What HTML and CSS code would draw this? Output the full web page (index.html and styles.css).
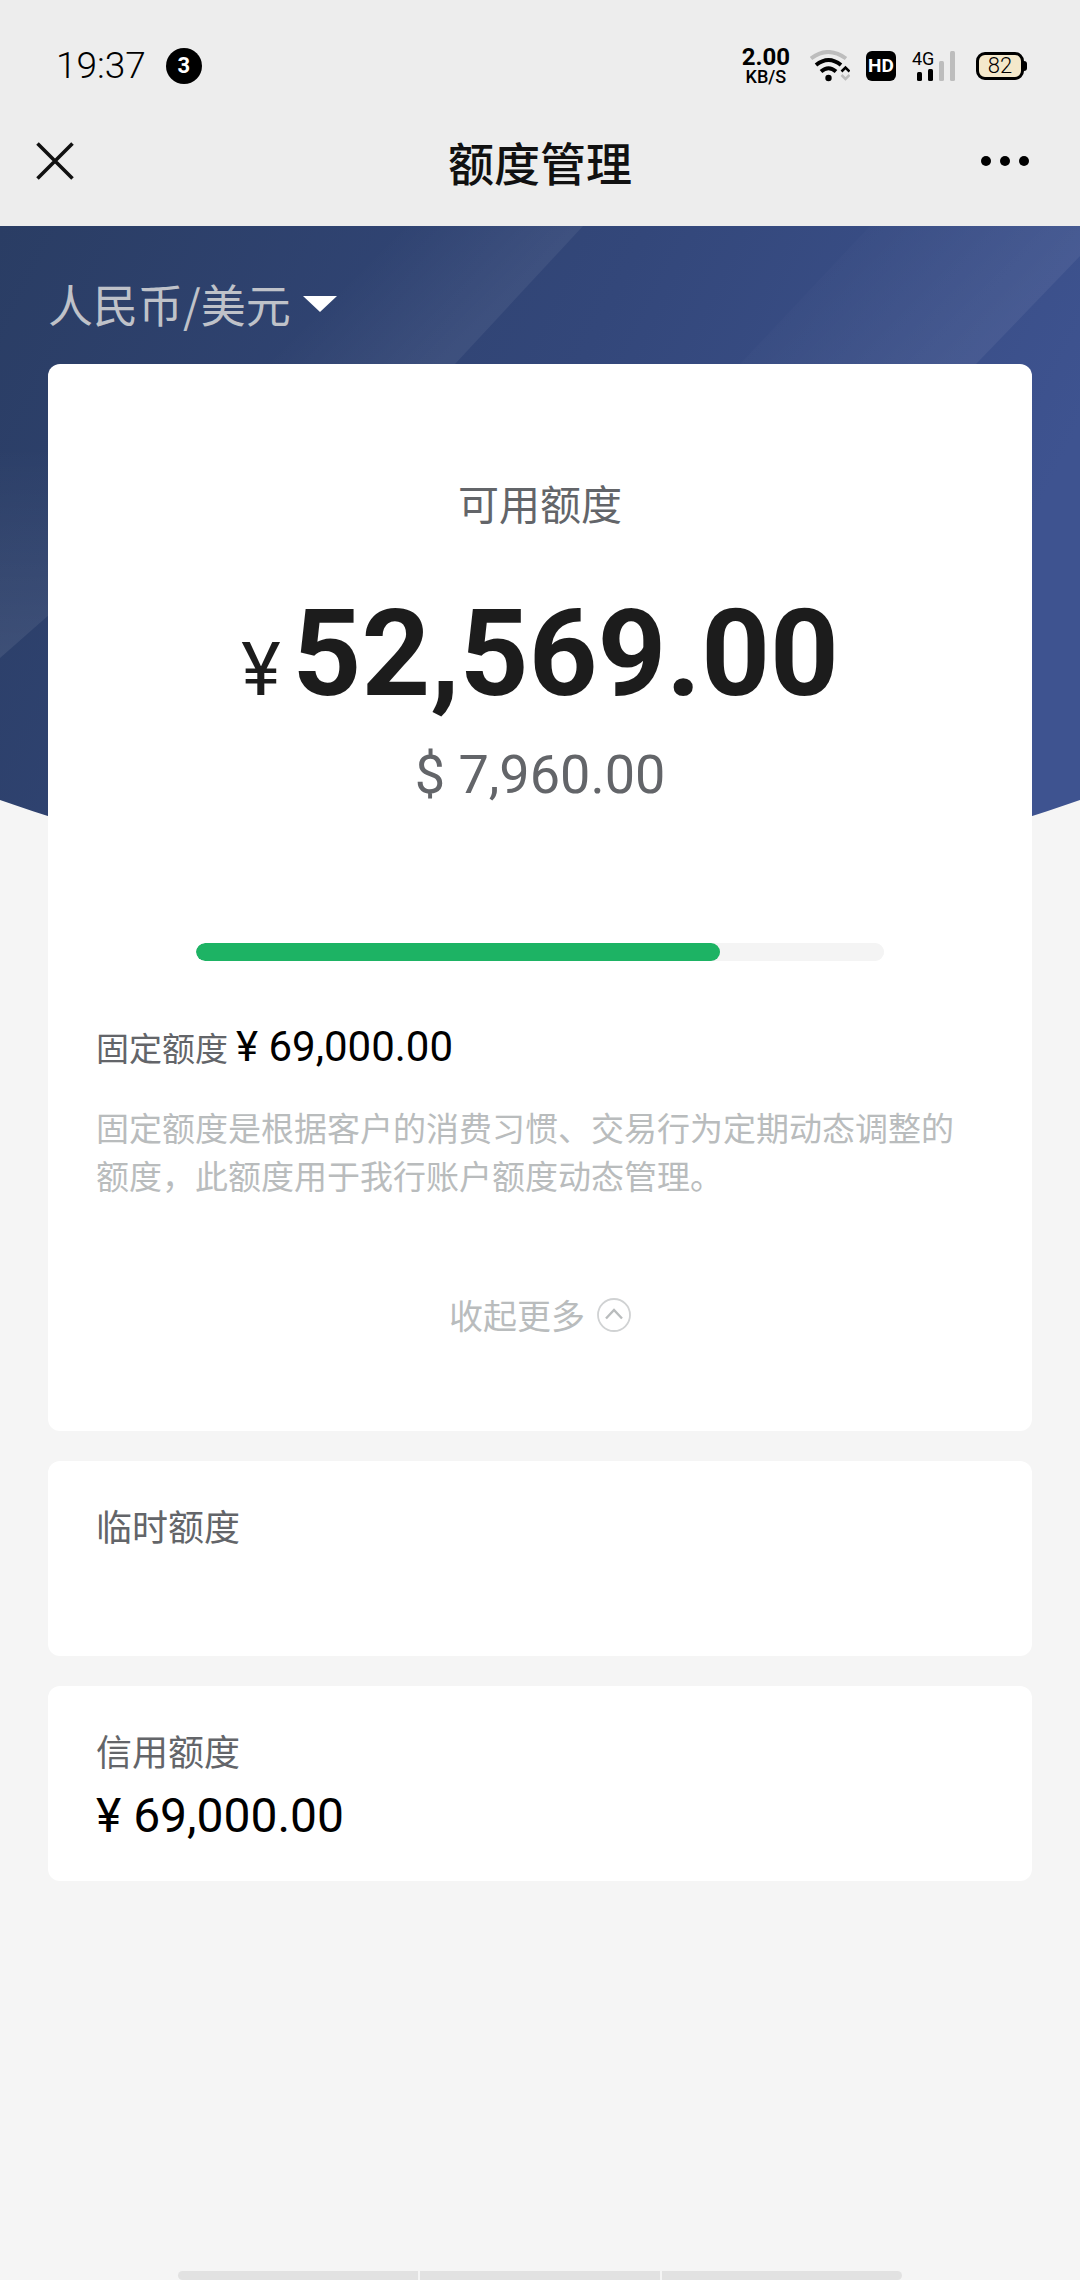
FILE: index.html
```html
<!DOCTYPE html>
<html lang="zh-CN">
<head>
<meta charset="utf-8">
<meta name="viewport" content="width=device-width, initial-scale=1">
<title>额度管理</title>
<link rel="stylesheet" href="styles.css">
</head>
<body>
<div class="screen">
  <div class="status">
    <div class="status-side">
      <span class="clock">19:37</span>
      <span class="count">3</span>
    </div>
    <div class="status-side status-icons">
      <div class="speed"><span class="speed-value">2.00</span><span class="speed-unit">KB/S</span></div>
      <svg class="wifi" width="40" height="32" viewBox="0 0 40 32" fill="none">
        <path d="M1 8.500Q18 -4.500 36 8.500" stroke="#bdbdbd" stroke-width="4"/>
        <path d="M6 15Q18.500 5 31 15" stroke="#000" stroke-width="4"/>
        <path d="M11 21.500Q18.500 15 26 21.500" stroke="#000" stroke-width="4"/>
        <circle cx="18.500" cy="28" r="3.200" fill="#000"/>
        <path d="M31.500 21.500L35.500 17.500L39.500 21.500" stroke="#000" stroke-width="2.500"/>
        <path d="M31.500 25L35.500 29L39.500 25" stroke="#bdbdbd" stroke-width="2.500"/>
      </svg>
      <span class="hd">HD</span>
      <div class="signal">
        <span class="signal-label">4G</span>
        <svg width="44" height="30" viewBox="0 0 44 30">
          <rect x="5" y="21" width="5" height="9" rx="1.500"/>
          <rect x="16" y="18" width="5" height="12" rx="1.500"/>
          <rect x="27" y="10" width="5" height="20" rx="1.500" fill="#bdbdbd"/>
          <rect x="38" y="0" width="5" height="30" rx="1.500" fill="#bdbdbd"/>
        </svg>
      </div>
      <div class="battery">82</div>
    </div>
  </div>
  <header class="nav">
    <button class="icon-button" type="button" aria-label="关闭">
      <svg width="38" height="38" viewBox="0 0 38 38"><path d="M1.500 1.500L36.500 36.500M36.500 1.500L1.500 36.500" stroke="#111" stroke-width="3.600"/></svg>
    </button>
    <h1 class="title">额度管理</h1>
    <button class="icon-button icon-button-end" type="button" aria-label="更多">
      <svg width="50" height="12" viewBox="0 0 50 12"><circle cx="6" cy="6" r="5"/><circle cx="25" cy="6" r="5"/><circle cx="44" cy="6" r="5"/></svg>
    </button>
  </header>
  <main class="content">
    <svg class="backdrop" viewBox="0 0 1080 664" preserveAspectRatio="none" aria-hidden="true">
      <defs>
        <linearGradient id="base" x1="0" y1="0" x2="1" y2="0.300">
          <stop offset="0" stop-color="#2a3d64"/><stop offset="0.550" stop-color="#33477a"/><stop offset="1" stop-color="#3e5390"/>
        </linearGradient>
        <linearGradient id="bandA" gradientUnits="userSpaceOnUse" x1="400" y1="0" x2="490" y2="90">
          <stop offset="0" stop-color="#fff" stop-opacity="0"/><stop offset="1" stop-color="#fff" stop-opacity="0.060"/>
        </linearGradient>
        <linearGradient id="bandB" gradientUnits="userSpaceOnUse" x1="860" y1="0" x2="980" y2="120">
          <stop offset="0" stop-color="#fff" stop-opacity="0.010"/><stop offset="1" stop-color="#fff" stop-opacity="0.060"/>
        </linearGradient>
        <linearGradient id="bandC" gradientUnits="userSpaceOnUse" x1="0" y1="220" x2="0" y2="430">
          <stop offset="0" stop-color="#fff" stop-opacity="0"/><stop offset="1" stop-color="#fff" stop-opacity="0.080"/>
        </linearGradient>
        <clipPath id="dome"><path d="M0 0H1080V574Q540 764 0 574Z"/></clipPath>
      </defs>
      <g clip-path="url(#dome)">
        <path d="M0 0H1080V664H0Z" fill="url(#base)"/>
        <path d="M380 0H583L455 138H242Z" fill="url(#bandA)"/>
        <path d="M870 0H1080V30L976 138H740Z" fill="url(#bandB)"/>
        <path d="M0 220H50V388L0 432Z" fill="url(#bandC)"/>
      </g>
    </svg>
    <div class="currency">
      <select class="currency-select" aria-label="币种"><option>人民币/美元</option></select>
      <svg width="34" height="16" viewBox="0 0 34 16" aria-hidden="true"><path d="M0 0H34L17 16Z" fill="#fff"/></svg>
    </div>
    <section class="card card-main">
      <h2 class="available">可用额度</h2>
      <p class="balance"><span class="balance-sign">¥</span>52,569.00</p>
      <p class="balance-usd">$ 7,960.00</p>
      <progress class="usage" value="52569" max="69000" aria-label="可用额度占比"></progress>
      <p class="fixed"><span class="fixed-label">固定额度</span><span class="fixed-value">¥ 69,000.00</span></p>
      <p class="note">固定额度是根据客户的消费习惯、交易行为定期动态调整的额度，此额度用于我行账户额度动态管理。</p>
      <button class="collapse" type="button">收起更多
        <svg width="34" height="34" viewBox="0 0 34 34" fill="none" aria-hidden="true"><circle cx="17" cy="17" r="16" stroke="#d0d2d3" stroke-width="1.800"/><path d="M9 20.500L17 12L25 20.500" stroke="#b9bcbd" stroke-width="2.400"/></svg>
      </button>
    </section>
    <section class="card card-small"><h2 class="card-label">临时额度</h2></section>
    <section class="card card-small"><h2 class="card-label">信用额度</h2><p class="card-value">¥ 69,000.00</p></section>
  </main>
  <div class="gestures"><span></span><span></span><span></span></div>
</div>
</body>
</html>
```

FILE: styles.css
```css
* { box-sizing: border-box; margin: 0; padding: 0; }

body {
  background: #f5f5f5;
  color: #000;
  font-family: "Noto Sans CJK SC", sans-serif;
}

button, select {
  appearance: none;
  border: 0;
  background: none;
  color: inherit;
  font: inherit;
}

svg { display: block; flex: none; }

h1, h2 { font-weight: 400; }

.screen { display: flex; flex-direction: column; min-height: 100vh; }

/* System status bar */
.status {
  display: flex;
  justify-content: space-between;
  align-items: center;
  height: 96px;
  padding: 36px 56px 0 56px;
  background: #ededed;
  font-family: Roboto, sans-serif;
}
.status-side { display: flex; align-items: center; gap: 20px; }
.clock { font-size: 37px; font-weight: 300; line-height: 36px; }
.count {
  width: 36px;
  border-radius: 50%;
  background: #000;
  color: #fff;
  font-size: 22px;
  font-weight: 700;
  line-height: 36px;
  text-align: center;
}
.speed { display: flex; flex-direction: column; align-items: center; font-weight: 700; }
.speed-value { font-size: 24px; line-height: 22px; }
.speed-unit { font-size: 18px; font-weight: 500; line-height: 18px; }
.hd {
  width: 30px;
  margin: 0 -4px;
  border-radius: 6px;
  background: #000;
  color: #fff;
  font-size: 19px;
  font-weight: 700;
  line-height: 30px;
  text-align: center;
}
.signal { position: relative; }
.signal-label { position: absolute; top: 0; left: 0; font-size: 18px; line-height: 16px; }
.battery {
  position: relative;
  width: 48px;
  border: 3px solid #000;
  border-radius: 9px;
  background: #f4e8cb;
  font-size: 22px;
  font-weight: 300;
  line-height: 22px;
  text-align: center;
}
.battery::after {
  content: "";
  position: absolute;
  top: 6px;
  right: -6px;
  width: 3px;
  height: 10px;
  border-radius: 0 3px 3px 0;
  background: #000;
}

/* Title bar */
.nav {
  display: grid;
  grid-template-columns: 1fr auto 1fr;
  align-items: center;
  height: 130px;
  padding: 0 36px;
  background: #ededed;
}
.icon-button { justify-self: start; cursor: pointer; }
.icon-button-end { justify-self: end; padding-right: 14px; }
.title { color: #111; font-size: 46px; font-weight: 500; line-height: 60px; }

/* Page content */
.content {
  position: relative;
  display: flex;
  flex-direction: column;
  gap: 30px;
  padding: 48px 48px 0;
}
.backdrop { position: absolute; top: 0; left: 0; z-index: -1; width: 100%; height: 664px; }
.currency { display: flex; align-items: center; gap: 12px; height: 60px; }
.currency-select { color: #bfc2c9; font-size: 45px; line-height: 60px; }

.card { border-radius: 12px; background: #fff; padding: 0 48px; }
.card-main { display: flex; flex-direction: column; padding-bottom: 92px; padding-top: 108px; }
.available { color: #636569; font-size: 41px; line-height: 60px; text-align: center; }
.balance {
  margin-top: 52px;
  color: #1c1c1c;
  font: 700 120px/140px Roboto, sans-serif;
  text-align: center;
}
.balance-sign { margin-right: 12px; font-size: 75px; font-weight: 400; }
.balance-usd { color: #636569; font: 54px/64px Roboto, sans-serif; margin-top: 4px; text-align: center; }
.usage {
  appearance: none;
  width: calc(100% - 200px);
  height: 18px;
  margin: 136px 100px 0;
  border: 0;
  border-radius: 9px;
  background: #f4f4f4;
  overflow: hidden;
}
.usage::-webkit-progress-bar { background: #f4f4f4; border-radius: 9px; }
.usage::-webkit-progress-value { background: #1db364; border-radius: 9px; }
.fixed { display: flex; align-items: baseline; gap: 8px; margin-top: 56px; line-height: 60px; }
.fixed-label { color: #636569; font-size: 33px; }
.fixed-value { font-family: Roboto, sans-serif; font-size: 42px; }
.note { margin-top: 26px; color: #b9bcbd; font-size: 33px; line-height: 48px; }
.collapse {
  display: flex;
  align-self: center;
  align-items: center;
  gap: 12px;
  margin-top: 92px;
  color: #b9bcbd;
  font-size: 34px;
  line-height: 48px;
  cursor: pointer;
}
.card-small { min-height: 195px; padding-top: 38px; }
.card-label { color: #636569; font-size: 36px; line-height: 52px; }
.card-value { font: 48px/64px Roboto, sans-serif; margin-top: 8px; }

/* Gesture hint at the bottom edge */
.gestures { display: flex; justify-content: center; gap: 2px; margin-top: auto; padding: 0 178px; }
.gestures span { flex: 1; height: 9px; background: #e2e2e2; }
.gestures span:first-child { border-radius: 6px 0 0 6px; }
.gestures span:last-child { border-radius: 0 6px 6px 0; }
```
